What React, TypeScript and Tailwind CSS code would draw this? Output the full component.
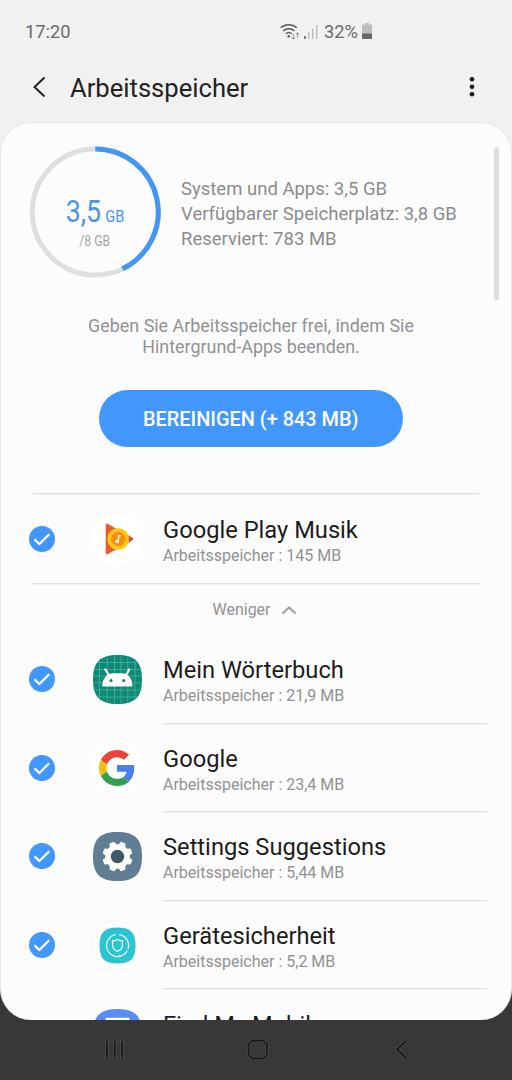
import React, { useState } from "react";

interface AppItem {
  id: string;
  name: string;
  size?: string;
  icon: React.ReactNode;
}

const SQUIRCLE =
  "M24.5 0C42 0 49 7 49 24.5S42 49 24.5 49 0 42 0 24.5 7 0 24.5 0Z";

const PlayMusicIcon: React.FC = () => (
  <svg viewBox="0 0 49 49" className="size-[49px]">
    <path d={SQUIRCLE} fill="#fff" />
    <path
      d="M12.7 10.5c0-1.6 1-2.2 2.3-1.5L38.800 22.400c1.600.9 1.600 2.300 0 3.200L15 39c-1.300.7-2.300.1-2.300-1.500Z"
      fill="#ee5a30"
    />
    <path d="M33.500 19.400 38.800 22.400c1.600.9 1.600 2.300 0 3.200l-5.300 3.100Z" fill="#e2472b" />
    <circle cx="25.200" cy="24" r="10.800" fill="#ffc91a" />
    <circle cx="25.200" cy="24" r="7.200" fill="#fb8c0c" />
    <circle cx="24.200" cy="26.500" r="1.800" fill="#fff" />
    <path d="M24.900 26.700v-6.700h2.900v1.800h-1.700v4.900Z" fill="#fff" />
  </svg>
);

const AndroidIcon: React.FC = () => (
  <svg viewBox="0 0 49 49" className="size-[49px]">
    <path d={SQUIRCLE} fill="#0b8a74" />
    <path
      d="M6.500 4.500v40M14.200 1v47M21.500 0v49M28 0v49M34.800 1v47M42 4.500v40M4 7.500h41M1 14.500h47M0 21h49M0 27.800h49M0 35h49M4 42h41"
      stroke="#54ad9e"
      strokeWidth="0.8"
    />
    <path
      d="m16.500 21-4.200-6.600M32.500 21l3.800-6.600"
      stroke="#fff"
      strokeWidth="2.200"
      strokeLinecap="round"
    />
    <path
      d="M9.200 31.500c0-8 4.600-13.300 11-13.300h8.600c6.400 0 10.700 5.300 10.700 13.300Z"
      fill="#fff"
    />
    <circle cx="18" cy="25.500" r="1.600" fill="#0b8a74" />
    <circle cx="30.700" cy="25.500" r="1.600" fill="#0b8a74" />
  </svg>
);

const GoogleIcon: React.FC = () => (
  <svg viewBox="0 0 49 49" className="size-[49px]">
    <path d={SQUIRCLE} fill="#fff" />
    <g transform="translate(6 7) scale(.75)">
      <path
        fill="#e94435"
        d="M24 9.500c3.540 0 6.710 1.220 9.210 3.600l6.850-6.850C35.900 2.380 30.470 0 24 0 14.620 0 6.510 5.380 2.560 13.220l7.980 6.190C12.430 13.720 17.740 9.500 24 9.500z"
      />
      <path
        fill="#4a80ee"
        d="M46.980 24.550c0-1.570-.15-3.090-.38-4.550H24v9.020h12.940c-.58 2.960-2.260 5.480-4.780 7.180l7.730 6c4.510-4.180 7.090-10.360 7.090-17.650z"
      />
      <path
        fill="#fbbc05"
        d="M10.530 28.590c-.48-1.450-.76-2.990-.76-4.590s.27-3.140.76-4.590l-7.980-6.190C.92 16.460 0 20.120 0 24c0 3.880.92 7.540 2.560 10.780l7.970-6.190z"
      />
      <path
        fill="#34a04f"
        d="M24 48c6.480 0 11.930-2.130 15.890-5.810l-7.730-6c-2.150 1.450-4.920 2.300-8.160 2.300-6.260 0-11.570-4.220-13.470-9.910l-7.980 6.190C6.510 42.620 14.620 48 24 48z"
      />
    </g>
  </svg>
);

const TEETH = [22.5, 67.5, 112.5, 157.5, 202.5, 247.5, 292.5, 337.5];

const SettingsIcon: React.FC = () => (
  <svg viewBox="0 0 49 49" className="size-[49px]">
    <path d={SQUIRCLE} fill="#5f7e93" />
    <circle cx="24.500" cy="24.500" r="12.200" fill="#fff" />
    {TEETH.map((angle) => (
      <path
        key={angle}
        d="M20.600 14.500 21.700 10.300q.2-.9 1.100-.9h3.400q.9 0 1.100.9l1.100 4.200Z"
        fill="#fff"
        transform={`rotate(${angle} 24.500 24.500)`}
      />
    ))}
    <circle cx="24.500" cy="24.500" r="6.700" fill="#3b5a64" />
  </svg>
);

const SecurityIcon: React.FC = () => (
  <svg viewBox="0 0 49 49" className="size-[49px] overflow-visible">
    <path d={SQUIRCLE} fill="#fff" stroke="#f3f3f3" strokeWidth="0.8" />
    <path
      d="M24.500 6.500c13 0 18 5 18 18s-5 18-18 18-18-5-18-18 5-18 18-18Z"
      fill="#2bc4d3"
    />
    <g fill="none" stroke="#e9fbfc" strokeWidth="1.300" strokeLinecap="round">
      <path d="M26.500 13.700a11 11 0 0 1 8.700 13.700M34 30.200A11 11 0 1 1 22.500 13.700" />
      <path d="M19.600 19.700q3.400.3 4.900-1.300 1.500 1.600 4.900 1.300v5q0 3.500-4.900 5.700-4.900-2.200-4.900-5.700Z" />
    </g>
  </svg>
);

const FindMobileIcon: React.FC = () => (
  <svg viewBox="0 0 49 49" className="size-[49px]">
    <path d={SQUIRCLE} fill="#5a8af5" />
    <rect x="12.500" y="8.800" width="24" height="31" rx="1" fill="#fff" />
  </svg>
);

const mainApp: AppItem = {
  id: "music",
  name: "Google Play Musik",
  size: "145 MB",
  icon: <PlayMusicIcon />,
};

const moreApps: AppItem[] = [
  { id: "dict", name: "Mein Wörterbuch", size: "21,9 MB", icon: <AndroidIcon /> },
  { id: "google", name: "Google", size: "23,4 MB", icon: <GoogleIcon /> },
  { id: "settings", name: "Settings Suggestions", size: "5,44 MB", icon: <SettingsIcon /> },
  { id: "security", name: "Gerätesicherheit", size: "5,2 MB", icon: <SecurityIcon /> },
  { id: "find", name: "Find My Mobile", icon: <FindMobileIcon /> },
];

interface RowProps {
  app: AppItem;
  checked: boolean;
  onToggle: (id: string) => void;
}

const AppRow: React.FC<RowProps> = ({ app, checked, onToggle }) => (
  <button
    type="button"
    onClick={() => onToggle(app.id)}
    className="flex h-full w-full items-center pl-[28px] text-left"
  >
    <svg viewBox="0 0 26 26" className="mr-[37.5px] size-[26px] shrink-0">
      <circle cx="13" cy="13" r="13" fill={checked ? "#4297fd" : "#d5d5d5"} />
      <path
        d="m5.500 13.300 4.900 4.700 9.800-9.800"
        fill="none"
        stroke="#fff"
        strokeWidth="2.300"
      />
    </svg>
    <span className="mr-[21.5px] shrink-0">{app.icon}</span>
    <span className="flex flex-col pt-[7px]">
      <span className="text-[23.7px] leading-[27px] whitespace-nowrap text-[#1c1c1c]">
        {app.name}
      </span>
      <span className="h-[24px] text-[16px] leading-[24px] whitespace-nowrap text-[#929292]">
        {app.size && `Arbeitsspeicher : ${app.size}`}
      </span>
    </span>
  </button>
);

const StatusBar: React.FC = () => (
  <div className="flex h-[62px] items-center pt-[2px] pl-[25px] text-[18.3px] text-[#6a6a6a]">
    <span className="w-[255px]">17:20</span>
    <svg width="20" height="18" viewBox="0 0 20 18" fill="none">
      <path
        d="M.8 4.800a12 12 0 0 1 16 0M3.200 7.900a8.200 8.200 0 0 1 11.200 0M5.800 10.800a4.600 4.600 0 0 1 6 0"
        stroke="#5c5c5c"
        strokeWidth="1.500"
      />
      <circle cx="8.800" cy="13.300" r="1.300" fill="#5c5c5c" />
      <path
        d="M13.400 11v5m-1.600-1.600 1.600 1.700 1.600-1.700M17.500 15v-5m-1.600 1.600 1.600-1.700 1.600 1.700"
        stroke="#a8a8a8"
        strokeWidth="1.100"
      />
    </svg>
    <svg width="14" height="16" viewBox="0 0 14 16" className="mb-px ml-[4px]">
      <path d="M4.800 8v7M8.700 4.500V15M12.700 1v14" stroke="#bdbdbd" strokeWidth="1.400" />
      <path d="M1 12v3" stroke="#5c5c5c" strokeWidth="1.600" />
    </svg>
    <span className="ml-[6px]">32%</span>
    <svg width="10" height="16" viewBox="0 0 10 16" className="mb-[2px] ml-[4px]">
      <path d="M3 0h4v1.500h2q1 0 1 1V11H0V2.500q0-1 1-1h2Z" fill="#bdbdbd" />
      <path d="M0 10.500h10V15q0 1-1 1H1q-1 0-1-1Z" fill="#666" />
    </svg>
  </div>
);

const MemoryRing: React.FC = () => (
  <div className="relative flex size-[132px] shrink-0 flex-col items-center">
    <svg viewBox="0 0 132 132" className="absolute inset-0">
      <circle cx="66.300" cy="66" r="63" fill="none" stroke="#dfdfdf" strokeWidth="5" />
      <path
        d="M66.300 3a63 63 0 0 1 27.200 119.800"
        fill="none"
        stroke="#4297f5"
        strokeWidth="5"
      />
    </svg>
    <div className="mt-[48px] flex scale-x-[0.86] items-baseline text-[#4a95ea]">
      <span className="text-[31px] leading-[36px]">3,5</span>
      <span className="ml-[5px] text-[17px]">GB</span>
    </div>
    <div className="mt-[3px] scale-x-[0.87] text-[14px] leading-[16px] text-[#a5a5a5]">
      /8 GB
    </div>
  </div>
);

const NavigationBar: React.FC = () => (
  <nav className="flex h-[60px] items-center pl-[99px]">
    {/* Dark glyphs with a faint light outline */}
    <svg width="32" height="24" viewBox="0 0 32 24" fill="none">
      <path d="M8 2v19M15.700 2v19M23 2v19" stroke="#5c5a58" strokeWidth="3" />
      <path d="M8 2.500v18M15.700 2.500v18M23 2.500v18" stroke="#171615" strokeWidth="1.800" />
    </svg>
    <svg width="24" height="24" viewBox="0 0 24 24" fill="none" className="ml-[115px]">
      <rect x="2.500" y="2.500" width="18.500" height="18" rx="5.500" stroke="#5c5a58" strokeWidth="3" />
      <rect x="2.500" y="2.500" width="18.500" height="18" rx="5.500" stroke="#171615" strokeWidth="1.800" />
    </svg>
    <svg width="24" height="24" viewBox="0 0 24 24" fill="none" className="ml-[120px]">
      <path d="m16.500 2.500-9.500 9 9.500 9" stroke="#5c5a58" strokeWidth="3" />
      <path d="m16.500 2.500-9.500 9 9.500 9" stroke="#171615" strokeWidth="1.800" />
    </svg>
  </nav>
);

const App: React.FC = () => {
  const [unchecked, setUnchecked] = useState<string[]>([]);
  const [expanded, setExpanded] = useState<boolean>(true);

  const handleToggle = (id: string): void => {
    setUnchecked((prev) =>
      prev.includes(id) ? prev.filter((item) => item !== id) : [...prev, id]
    );
  };

  return (
    <div className="flex h-[1080px] w-[512px] flex-col overflow-hidden bg-[linear-gradient(#f1f1f1_600px,#3a3837_600px)] font-[Roboto,sans-serif]">
      <StatusBar />

      <header className="flex h-[60px] shrink-0 items-center pr-[36px] pb-[9px] pl-[32px]">
        <svg width="14" height="22" viewBox="0 0 14 22" fill="none" className="mb-px">
          <path d="M12.500 1.500 2.500 11l10 9.500" stroke="#222" strokeWidth="2" />
        </svg>
        <h1 className="ml-[24px] grow pt-[2px] text-[25.6px] text-[#222]">
          Arbeitsspeicher
        </h1>
        <svg width="8" height="22" viewBox="0 0 8 22" fill="#1a1a1a" className="mb-px">
          <circle cx="4" cy="3.300" r="2.300" />
          <circle cx="4" cy="10.800" r="2.300" />
          <circle cx="4" cy="18.300" r="2.300" />
        </svg>
      </header>

      <main className="relative h-[898px] shrink-0 overflow-hidden rounded-[31px] border-x border-t border-[#e8e8e8] bg-[#fcfcfc]">
        {/* Scrollbar */}
        <div className="absolute top-[24px] right-[12px] h-[153px] w-[5px] rounded-full bg-[#dedede]" />

        <section className="flex items-center pt-[23px] pl-[28px]">
          <MemoryRing />
          <div className="mt-[4px] ml-[20px] text-[18.5px] leading-[25px] text-[#8c8c8c]">
            <p>System und Apps: 3,5 GB</p>
            <p>Verfügbarer Speicherplatz: 3,8 GB</p>
            <p>Reserviert: 783 MB</p>
          </div>
        </section>

        <p className="mt-[37px] pr-[10px] text-center text-[17.9px] leading-[21px] text-[#929292]">
          Geben Sie Arbeitsspeicher frei, indem Sie
          <br />
          Hintergrund-Apps beenden.
        </p>

        <button
          type="button"
          className="mt-[33px] ml-[98px] flex h-[56.5px] w-[303.500px] items-center justify-center rounded-full bg-[#4297fd] pt-[3px] text-[19.9px] font-medium text-white"
        >
          BEREINIGEN (+ 843 MB)
        </button>

        <div className="mt-[46.5px] ml-[32px] h-[2px] w-[446px] border-b border-[#f1f1f1] bg-[#e0e0e0]" />
        <div className="h-[88px]">
          <AppRow
            app={mainApp}
            checked={!unchecked.includes(mainApp.id)}
            onToggle={handleToggle}
          />
        </div>
        <div className="ml-[32px] h-[2px] w-[446px] border-b border-[#f1f1f1] bg-[#e0e0e0]" />

        <button
          type="button"
          onClick={() => setExpanded(!expanded)}
          className="flex h-[51px] w-full items-center justify-center pr-[3px] pb-[2px] text-[16px] text-[#929292]"
        >
          {expanded ? "Weniger" : "Mehr"}
          <svg
            width="16"
            height="10"
            viewBox="0 0 16 10"
            fill="none"
            className={expanded ? "ml-[10px]" : "ml-[10px] rotate-180"}
          >
            <path d="m1.500 8.500 6.500-6 6.500 6" stroke="#a5a5a5" strokeWidth="2.200" />
          </svg>
        </button>

        {expanded &&
          moreApps.map((app) => (
            <div key={app.id} className="flex h-[88.6px] flex-col">
              <div className="min-h-0 flex-1">
                <AppRow
                  app={app}
                  checked={!unchecked.includes(app.id)}
                  onToggle={handleToggle}
                />
              </div>
              <div className="ml-[161.5px] h-[2px] w-[324px] border-b border-[#f1f1f1] bg-[#e0e0e0]" />
            </div>
          ))}
      </main>

      <NavigationBar />
    </div>
  );
};

export default App;
